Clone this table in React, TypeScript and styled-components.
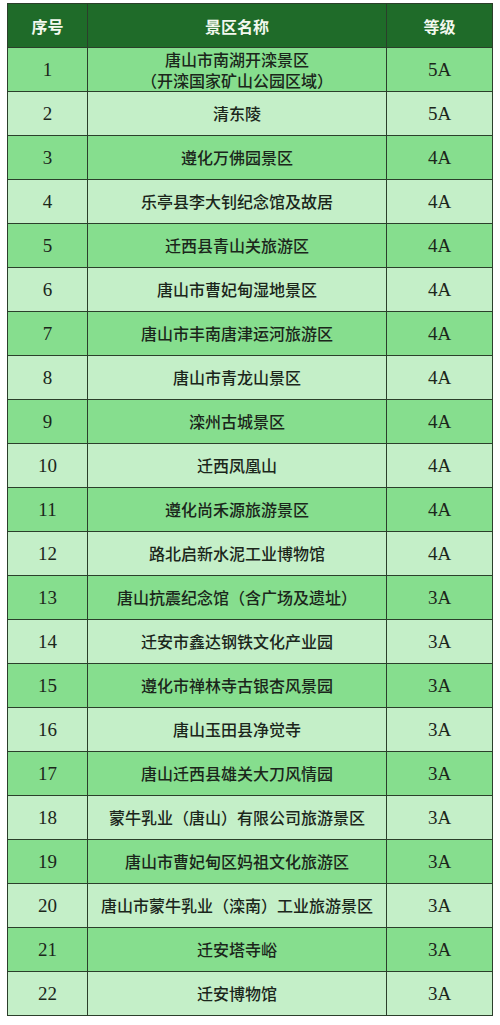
import React from 'react';
import styled, { createGlobalStyle } from 'styled-components';

const GlobalStyle = createGlobalStyle`
  html, body {
    margin: 0;
    padding: 0;
    background: #ffffff;
  }
`;

const Page = styled.div`
  width: 500px;
  padding: 3px 7px 0 7px;
  box-sizing: border-box;
`;

const Grid = styled.div`
  display: grid;
  grid-template-columns: 79px 298px 105px;
  grid-auto-rows: 43px;
  gap: 1px;
  padding: 1px;
  background: #2b3f2b;
  width: 486px;
  box-sizing: border-box;
`;

const HeadCell = styled.div`
  display: flex;
  align-items: center;
  justify-content: center;
  background: #1f6b29;
  color: #f2f8ee;
  font-family: 'Noto Sans CJK SC', sans-serif;
  font-weight: 700;
  font-size: 16px;
`;

const Cell = styled.div<{ dark: boolean }>`
  display: flex;
  align-items: center;
  justify-content: center;
  text-align: center;
  background: ${(p) => (p.dark ? '#86de8e' : '#c4efc8')};
  color: #1b261b;
  font-family: 'Liberation Serif', 'Noto Sans CJK SC', serif;
  font-size: 19px;
  line-height: 20px;
`;

const Name = styled(Cell)`
  font-family: 'Noto Sans CJK SC', sans-serif;
  font-size: 16px;
  font-weight: 500;
  text-spacing-trim: space-all;
`;

const Line = styled.div`
  line-height: 21px;
  white-space: nowrap;
`;

const rows: [string, string][] = [
  ['唐山市南湖开滦景区\n（开滦国家矿山公园区域）', '5A'],
  ['清东陵', '5A'],
  ['遵化万佛园景区', '4A'],
  ['乐亭县李大钊纪念馆及故居', '4A'],
  ['迁西县青山关旅游区', '4A'],
  ['唐山市曹妃甸湿地景区', '4A'],
  ['唐山市丰南唐津运河旅游区', '4A'],
  ['唐山市青龙山景区', '4A'],
  ['滦州古城景区', '4A'],
  ['迁西凤凰山', '4A'],
  ['遵化尚禾源旅游景区', '4A'],
  ['路北启新水泥工业博物馆', '4A'],
  ['唐山抗震纪念馆（含广场及遗址）', '3A'],
  ['迁安市鑫达钢铁文化产业园', '3A'],
  ['遵化市禅林寺古银杏风景园', '3A'],
  ['唐山玉田县净觉寺', '3A'],
  ['唐山迁西县雄关大刀风情园', '3A'],
  ['蒙牛乳业（唐山）有限公司旅游景区', '3A'],
  ['唐山市曹妃甸区妈祖文化旅游区', '3A'],
  ['唐山市蒙牛乳业（滦南）工业旅游景区', '3A'],
  ['迁安塔寺峪', '3A'],
  ['迁安博物馆', '3A'],
];

const App: React.FC = () => {
  return (
    <Page>
      <GlobalStyle />
      <Grid>
        <HeadCell>序号</HeadCell>
        <HeadCell>景区名称</HeadCell>
        <HeadCell>等级</HeadCell>
        {rows.map(([name, level], i) => {
          const dark = i % 2 === 0;
          return (
            <React.Fragment key={i}>
              <Cell dark={dark}>{i + 1}</Cell>
              <Name dark={dark}>
                <div>
                  {name.split('\n').map((line, j) => (
                    <Line key={j}>{line}</Line>
                  ))}
                </div>
              </Name>
              <Cell dark={dark}>{level}</Cell>
            </React.Fragment>
          );
        })}
      </Grid>
    </Page>
  );
};

export default App;
